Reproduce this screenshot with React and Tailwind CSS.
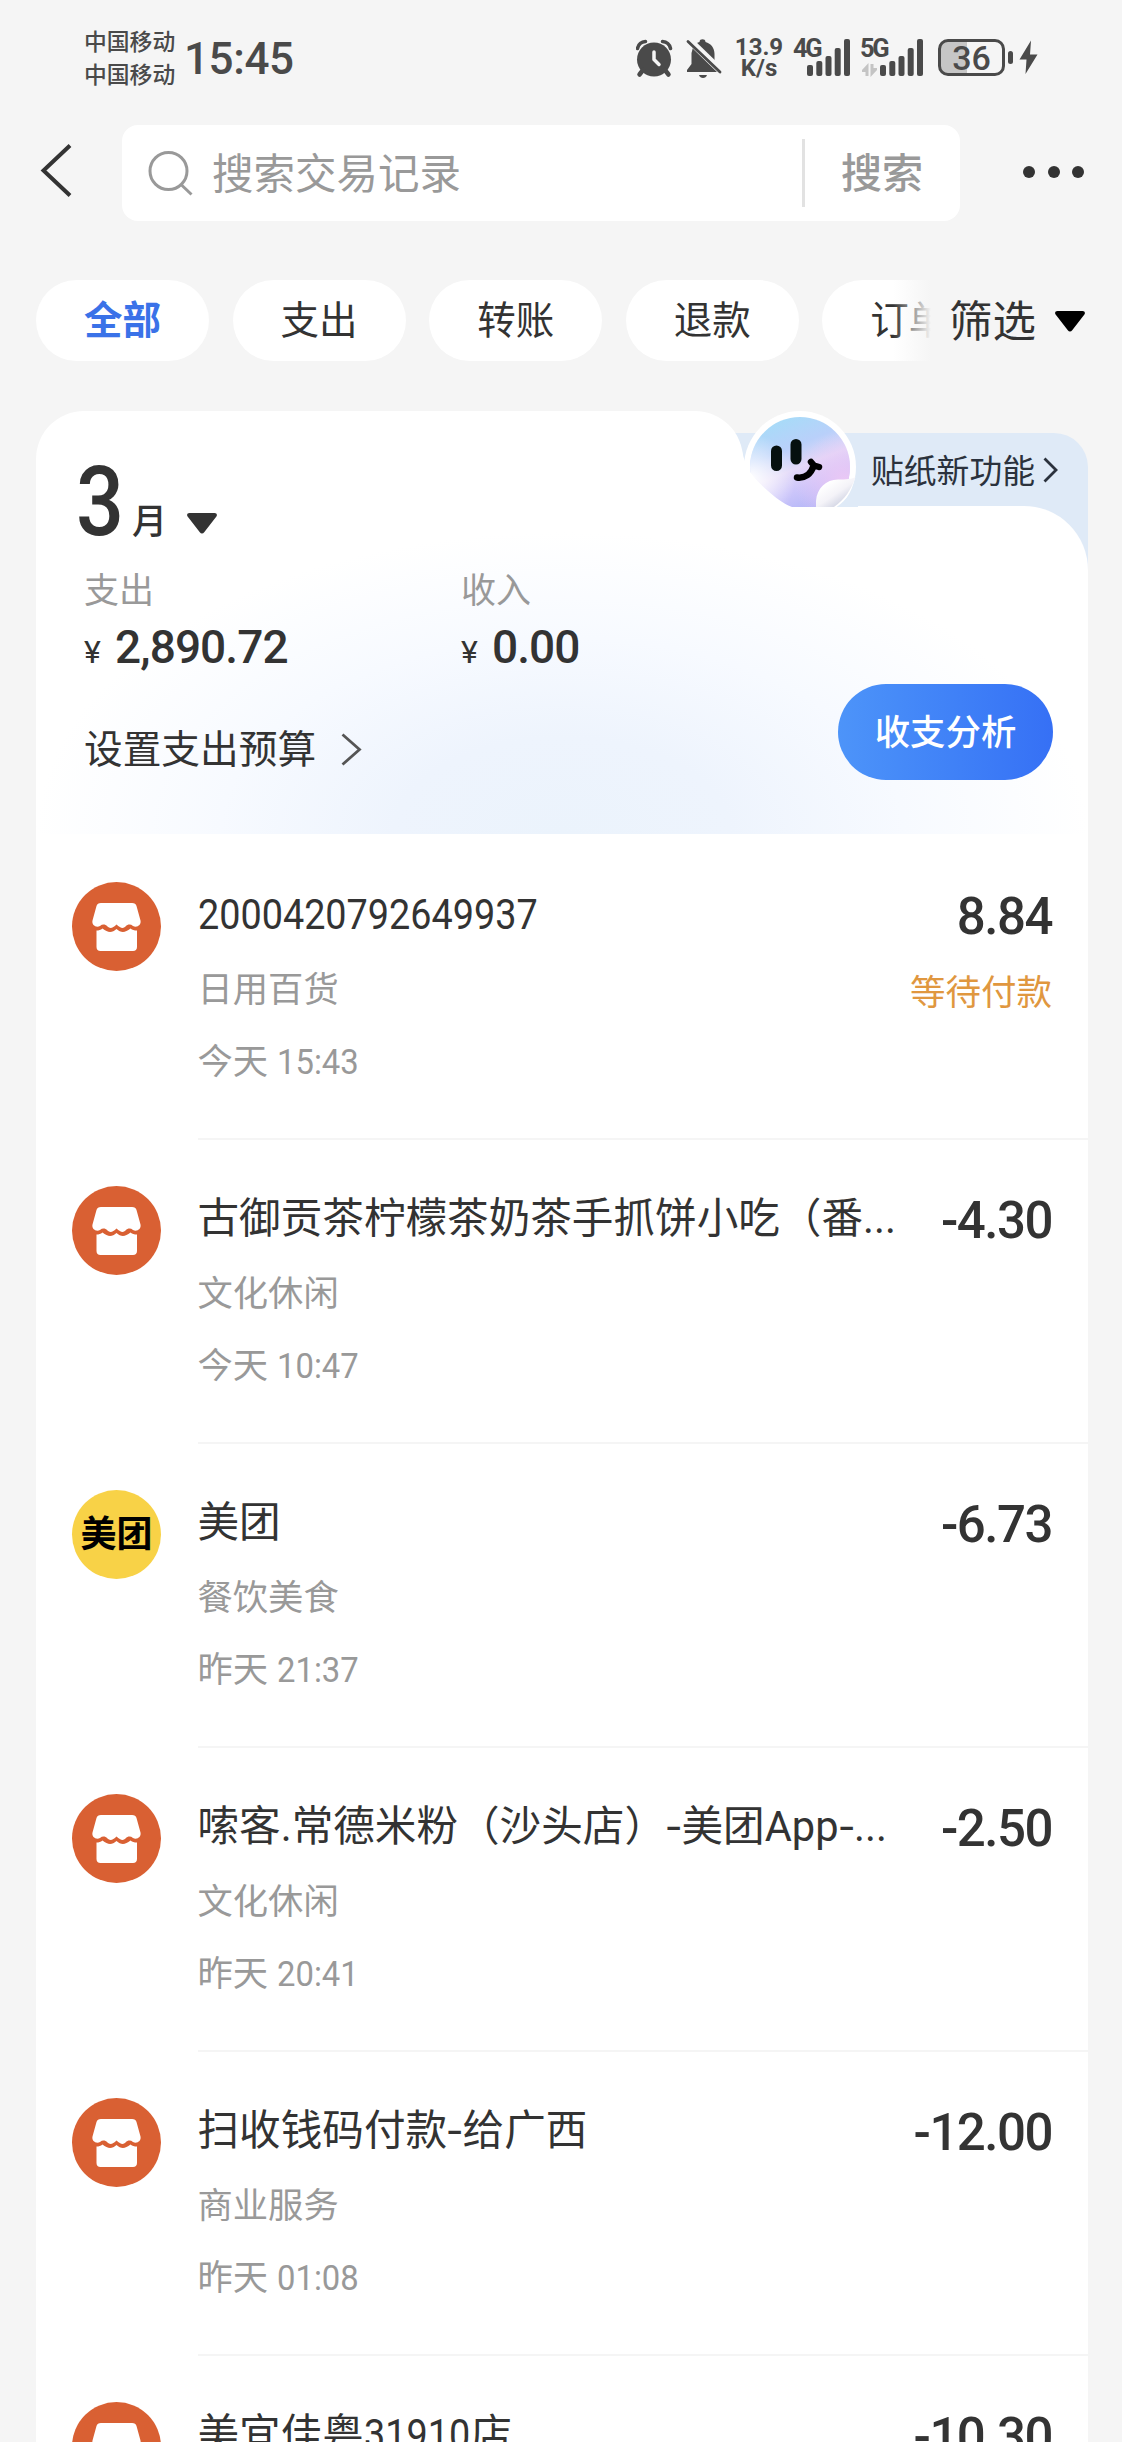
const tabs = ['全部', '支出', '转账', '退款', '订单']

const records = [
  { id: 1, title: '2000420792649937', category: '日用百货', day: '今天', time: '15:43', amount: '8.84', status: '等待付款' },
  { id: 2, title: '古御贡茶柠檬茶奶茶手抓饼小吃（番...', category: '文化休闲', day: '今天', time: '10:47', amount: '-4.30' },
  { id: 3, title: '美团', category: '餐饮美食', day: '昨天', time: '21:37', amount: '-6.73', icon: 'meituan' },
  { id: 4, title: '嗦客.常德米粉（沙头店）-美团App-...', category: '文化休闲', day: '昨天', time: '20:41', amount: '-2.50' },
  { id: 5, title: '扫收钱码付款-给广西', category: '商业服务', day: '昨天', time: '01:08', amount: '-12.00' },
  { id: 6, title: '美宜佳粤31910店', category: '', day: '', time: '', amount: '-10.30' }
]

// Digits are set a little narrower than the surrounding text
const Digits = ({ children }) => (
  <span
    className="inline-block origin-left scale-x-[0.908]"
    style={{ marginRight: `${-0.05 * children.length}em` }}
  >
    {children}
  </span>
)

const renderTitle = (title) =>
  title.split(/(\d{2,}|-)/).map((part, i) => {
    if (part === '-') return <span key={i} className="mx-[1px] inline-block scale-x-125 px-[1px]">-</span>
    return /^\d+$/.test(part) ? <Digits key={i}>{part}</Digits> : part
  })

const SignalBars = () => (
  <svg width="43" height="38" viewBox="0 0 43 38" fill="#4a4a4a">
    <rect x="0" y="26" width="6" height="11" rx="2" />
    <rect x="9.3" y="22" width="6" height="15" rx="2" />
    <rect x="18.5" y="17" width="6" height="20" rx="2" />
    <rect x="27.7" y="9" width="6" height="28" rx="2" />
    <rect x="37" y="0" width="6" height="37" rx="2" />
  </svg>
)

const StatusBar = () => (
  <div className="flex h-[125px] items-start pl-[84px] text-[#4a4a4a]">
    <div className="w-[92px] pt-[26px] text-[22.8px] font-medium leading-[33px]">
      <p>中国移动</p>
      <p>中国移动</p>
    </div>
    <div className="ml-[8px] w-[449px] pt-[34px] text-[44px] font-medium leading-[50px] tracking-[-0.4px]">15:45</div>

    <svg className="mt-[39px] ml-[3px]" width="37" height="39" viewBox="0 0 37 39">
      <circle cx="18" cy="20.5" r="17" fill="#4a4a4a" />
      <path d="M1.5 9.5C2.5 5 5.5 2.8 9.5 2.5M34.5 9.5C33.5 5 30.5 2.8 26.5 2.5" stroke="#4a4a4a" strokeWidth="3.5" fill="none" strokeLinecap="round" />
      <path d="M7 31L3.5 35.5M29 31L32.5 35.5" stroke="#4a4a4a" strokeWidth="4.5" strokeLinecap="round" />
      <path d="M18 13V20.5L23 25.5" stroke="#f5f5f5" strokeWidth="3.5" fill="none" strokeLinecap="round" strokeLinejoin="round" />
    </svg>
    <svg className="mt-[39px] ml-[13px]" width="36" height="40" viewBox="0 0 36 40">
      <path d="M7.5 6.5C9.5 4.5 11.5 3.5 13.5 3C13.5 1 15 .3 16.5 .3S19.5 1 19.5 3C25 4.5 28.5 9 28.5 15V24L34 33H1V31L5.5 25V14Z" fill="#4a4a4a" />
      <path d="M13 36H21C20 40 14 40 13 36Z" fill="#4a4a4a" />
      <path d="M1 -1L36 33" stroke="#f5f5f5" strokeWidth="7" />
      <path d="M2 2.5L34 33" stroke="#4a4a4a" strokeWidth="2.8" strokeLinecap="round" />
    </svg>
    <div className="ml-[12px] w-[50px] pt-[37px] text-center text-[24px] font-bold leading-[21px]">
      <p>13.9</p>
      <p>K/s</p>
    </div>
    <span className="ml-[9px] mt-[36px] w-[14px] text-[25.5px] font-bold leading-[24px] tracking-[-2.5px]">4G</span>
    <div className="mt-[39px]"><SignalBars /></div>
    <div className="ml-[10px] mt-[36px] w-[20px]">
      <p className="text-[25.5px] font-bold leading-[24px] tracking-[-2.5px]">5G</p>
      <svg className="mt-[3px] ml-[2px]" width="15" height="14" viewBox="0 0 15 14" fill="#c4c4c4">
        <path d="M6.5 0V13H3.5V9H0V7Z" />
        <path d="M8.5 14V1H11.5V5H15V7Z" />
      </svg>
    </div>
    <div className="mt-[39px]"><SignalBars /></div>
    <div className="ml-[15px] mt-[39px] flex h-[37px] w-[67px] items-center justify-center rounded-[10px] border-[3px] border-[#4a4a4a] bg-[linear-gradient(90deg,#c6c6c6_26px,transparent_26px)] text-[34px] font-medium leading-none">
      36
    </div>
    <div className="ml-[3px] mt-[51px] h-[13px] w-[5px] rounded-[3px] bg-[#4a4a4a]" />
    <svg className="ml-[6px] mt-[40px]" width="19" height="35" viewBox="0 0 19 35" fill="#4a4a4a">
      <path d="M12 0.5L0.5 19.5H7.5L6.5 34L18.5 14.5H11Z" />
    </svg>
  </div>
)

const SearchHeader = () => (
  <div className="flex h-24 items-center">
    <svg className="-mt-[4px] ml-[40px]" width="32" height="54" viewBox="0 0 32 54" fill="none" stroke="#333" strokeWidth="4">
      <path d="M30 1.5L3.5 26.5L30 51.5" />
    </svg>
    <div className="ml-[50px] flex h-24 w-[838px] items-center rounded-[16px] bg-white text-[#999]">
      <svg className="ml-[26px]" width="46" height="46" viewBox="0 0 46 46" fill="none" stroke="#999" strokeWidth="3">
        <circle cx="20.5" cy="21" r="18.5" />
        <path d="M33 34.5L43.5 44.5" />
      </svg>
      <span className="ml-[18px] flex-1 pt-[3px] text-[41.5px] leading-[48px]">搜索交易记录</span>
      <span className="h-[68px] w-[3px] bg-[#e2e2e2]" />
      <span className="w-[155px] pr-[1px] pt-[2px] text-center text-[41px] font-medium leading-[48px]">搜索</span>
    </div>
    <div className="-mt-[3px] ml-[63px] flex gap-[12.5px]">
      <i className="size-3 rounded-full bg-[#333]" />
      <i className="size-3 rounded-full bg-[#333]" />
      <i className="size-3 rounded-full bg-[#333]" />
    </div>
  </div>
)

const Caret = ({ className }) => (
  <svg className={className} width="30" height="21" viewBox="0 0 30 21" fill="currentColor">
    <path d="M2.5 0H27.5C29.8 0 30.6 2 29.2 3.8L17.2 19.3C16 20.9 14 20.9 12.8 19.3L0.8 3.8C-0.6 2 0.2 0 2.5 0Z" />
  </svg>
)

const FilterTabs = () => (
  <div className="mt-[59px] flex h-[81px] items-center pl-[36px]">
    <div className="relative flex h-full w-[895px] gap-[23.6px] overflow-hidden">
      {tabs.map((tab, i) => (
        <div
          key={tab}
          className={`flex h-full w-[173px] shrink-0 items-center justify-center rounded-full bg-white text-[38.5px] ${
            i === 0 ? 'font-bold text-[#3a72e8]' : 'text-[#333]'
          }`}
        >
          {tab}
        </div>
      ))}
      <div className="absolute inset-y-0 right-0 w-[38px] bg-gradient-to-r from-[#f5f5f5]/0 to-[#f5f5f5]" />
    </div>
    <span className="ml-[18px] pt-[4px] text-[43.5px] leading-[50px] text-[#333]">筛选</span>
    <Caret className="mt-[2px] ml-[19px] text-black" />
  </div>
)

const Sticker = () => (
  <svg className="absolute top-0 left-[706px]" width="116" height="96" viewBox="0 0 116 96">
    <defs>
      <linearGradient id="face" x1="0.3" y1="0" x2="0.7" y2="1">
        <stop offset="0" stopColor="#a6dcf8" />
        <stop offset="0.3" stopColor="#b9d0fa" />
        <stop offset="0.5" stopColor="#e3d9f8" />
        <stop offset="0.68" stopColor="#cdc6fa" />
        <stop offset="1" stopColor="#a9b0f6" />
      </linearGradient>
      <radialGradient id="glow" cx="0" cy="0.62" r="0.45">
        <stop offset="0" stopColor="#fff" />
        <stop offset="1" stopColor="#fff" stopOpacity="0" />
      </radialGradient>
      <radialGradient id="pink" cx="0.95" cy="0.65" r="0.5">
        <stop offset="0" stopColor="#ecc8f5" />
        <stop offset="1" stopColor="#ecc8f5" stopOpacity="0" />
      </radialGradient>
      <linearGradient id="curl" x1="0.3" y1="0.2" x2="0.75" y2="0.7">
        <stop offset="0" stopColor="#fff" />
        <stop offset="0.6" stopColor="#f4f3f8" />
        <stop offset="1" stopColor="#d9dbe8" />
      </linearGradient>
    </defs>
    <circle cx="58" cy="56" r="56" fill="#fff" />
    <circle cx="58" cy="56" r="50" fill="url(#face)" />
    <circle cx="58" cy="56" r="50" fill="url(#glow)" />
    <circle cx="58" cy="56" r="50" fill="url(#pink)" />
    <path d="M34.5 40V54.5M54 33.5V48" stroke="#06100f" strokeWidth="11" strokeLinecap="round" />
    <path d="M55 66.5C63 67.5 69 63 71.5 55M69 51L72 54.5L77 56" stroke="#000" strokeWidth="6.5" fill="none" strokeLinecap="round" strokeLinejoin="round" />
    <path d="M114 66C113 78 104 90 93 97H116V66Z" fill="#dfeaf7" />
    <path d="M74 96V90C75 77 84 68.5 96 68.5C104 68.5 110 68 113.5 66C109 79 103 88 92 96Z" fill="url(#curl)" />
    {/* card edge flowing from the left tab into the body */}
    <path d="M0 40C4 58 10 66 26 80C33 86 40 92 50 96H0Z" fill="#fff" />
  </svg>
)

const Summary = () => (
  <div>
    <div className="relative flex h-[95px]">
      <div className="relative z-10 w-[707px] rounded-t-[48px] bg-white" />
      <div className="mt-[22px] -ml-[60px] flex flex-1 items-center rounded-tr-[34px] bg-[#dfeaf7] pl-[188px] text-[#2b323d]">
        <span className="whitespace-nowrap pt-[4px] text-[32.8px] leading-[40px]">贴纸新功能</span>
        <svg className="mt-[1px] ml-[8px]" width="15" height="26" viewBox="0 0 15 26" fill="none" stroke="#2b323d" strokeWidth="2.8">
          <path d="M1.5 1.5L13 13L1.5 24.5" />
        </svg>
      </div>
      <div className="absolute inset-0 z-10">
        <Sticker />
      </div>
    </div>

    <div className="bg-[linear-gradient(#dfeaf7_70px,#fff_70px)]">
      <div className="flex h-[328px] flex-col rounded-tr-[64px] bg-white bg-[radial-gradient(ellipse_50%_92%_at_50%_100%,#ebf3fc_0%,#eef4fd_32%,#f7faff_65%,#ffffff_100%)]">
        <div className="relative z-20 -mt-[60px] flex h-[100px] shrink-0 items-start pl-[40px] text-[#333]">
          <span className="mt-[1px] w-[56px] origin-left scale-x-[0.88] text-[96px] font-medium leading-[110px]">3</span>
          <span className="mt-[53px] text-[35px] font-medium leading-[48px]">月</span>
          <Caret className="mt-[67px] ml-[20px]" />
        </div>

        <div className="flex pl-[48px] pt-[21px]">
          <div className="w-[377px]">
            <p className="text-[35px] leading-[50px] text-[#999]">支出</p>
            <p className="mt-[3px] flex items-baseline text-[#333]">
              <span className="w-[31px] text-[32px]">¥</span>
              <span className="text-[46px] font-medium leading-[54px] tracking-[-0.9px]">2,890.72</span>
            </p>
          </div>
          <div>
            <p className="text-[35px] leading-[50px] text-[#999]">收入</p>
            <p className="mt-[3px] flex items-baseline text-[#333]">
              <span className="w-[31px] text-[32px]">¥</span>
              <span className="text-[46px] font-medium leading-[54px] tracking-[-0.9px]">0.00</span>
            </p>
          </div>
        </div>

        <div className="flex justify-between pl-[48px] pr-[35px]">
          <div className="mt-[44px] flex h-[60px] items-center">
            <span className="text-[38.7px] leading-[50px] text-[#333]">设置支出预算</span>
            <svg className="-mt-[2px] ml-[25px]" width="21" height="33" viewBox="0 0 21 33" fill="none" stroke="#555" strokeWidth="2.8">
              <path d="M1.5 1.5L18.5 16.5L1.5 31.5" />
            </svg>
          </div>
          <button className="mt-[8px] h-24 w-[215px] rounded-full bg-gradient-to-r from-[#4d94f9] to-[#3670f5] pt-[3px] text-[35.4px] font-medium text-white">
            收支分析
          </button>
        </div>
      </div>
    </div>
  </div>
)

const StoreIcon = () => (
  <svg width="89" height="89" viewBox="0 0 89 89">
    <circle cx="44.5" cy="44.5" r="44.5" fill="#d96033" />
    <path d="M29 21H60C62.5 21 64 22 64.5 24L68.5 38.5C69.5 43 65 46 61 44C58.5 42 56 42 53.5 44.5C51 47 48.5 46 44.5 42.5C41 46 38 47 35.5 44.5C33 42 30.5 42 28 44C24 46 19.5 43 20.5 38.5L24.5 24C25 22 26.5 21 29 21Z" fill="#fff" />
    <path d="M24.5 48.5C27 48.5 28.5 48 30.5 46.500C36 51 40 51 44.5 47C49 51 53 51 58.5 46.500C60.5 48 62 48.500 65 48.500V65C65 67.500 63.500 69 61 69H28.500C26 69 24.500 67.500 24.500 65Z" fill="#fff" />
  </svg>
)

const MeituanIcon = () => (
  <div className="flex size-[89px] items-center justify-center rounded-full bg-[#f8d247] pt-[2px] text-[36px] font-bold text-black">
    美团
  </div>
)

const RecordItem = ({ record }) => (
  <div className="flex h-[304.2px] pl-[36px]">
    <div className="w-[125.5px] shrink-0 pt-[46px]">
      {record.icon === 'meituan' ? <MeituanIcon /> : <StoreIcon />}
    </div>
    <div className="flex min-w-0 flex-1 border-b-2 border-[#f5f5f5] pr-[36px]">
      <div className="w-[702px] pt-[48px]">
        <h3 className="whitespace-nowrap text-[41.6px] leading-[62px] text-[#333]">{renderTitle(record.title)}</h3>
        <p className="mt-[22px] text-[35.3px] leading-[44px] text-[#999]">{record.category}</p>
        <p className="mt-[28px] text-[35.3px] leading-[44px] text-[#999]">
          {record.day} {record.time && <span className="inline-block origin-left scale-x-[0.93]">{record.time}</span>}
        </p>
      </div>
      <div className="flex flex-1 flex-col items-end whitespace-nowrap pt-[51px]">
        <p className="text-[51px] font-medium leading-[60px] tracking-[-1.5px] text-[#333]">{record.amount}</p>
        {record.status && <p className="mt-[24px] text-[35.5px] leading-[44px] text-[#e0973f]">{record.status}</p>}
      </div>
    </div>
  </div>
)

const App = () => {
  return (
    <div className="h-[2442px] w-[1122px] overflow-hidden bg-[#f5f5f5] font-[Roboto,'Noto_Sans_CJK_SC',sans-serif]">
      <StatusBar />
      <SearchHeader />
      <FilterTabs />
      <div className="mt-[50px] ml-[36px] w-[1052px]">
        <Summary />
        <div className="bg-white pt-[1.5px]">
          {records.map((record) => (
            <RecordItem key={record.id} record={record} />
          ))}
        </div>
      </div>
    </div>
  )
}

export default App
